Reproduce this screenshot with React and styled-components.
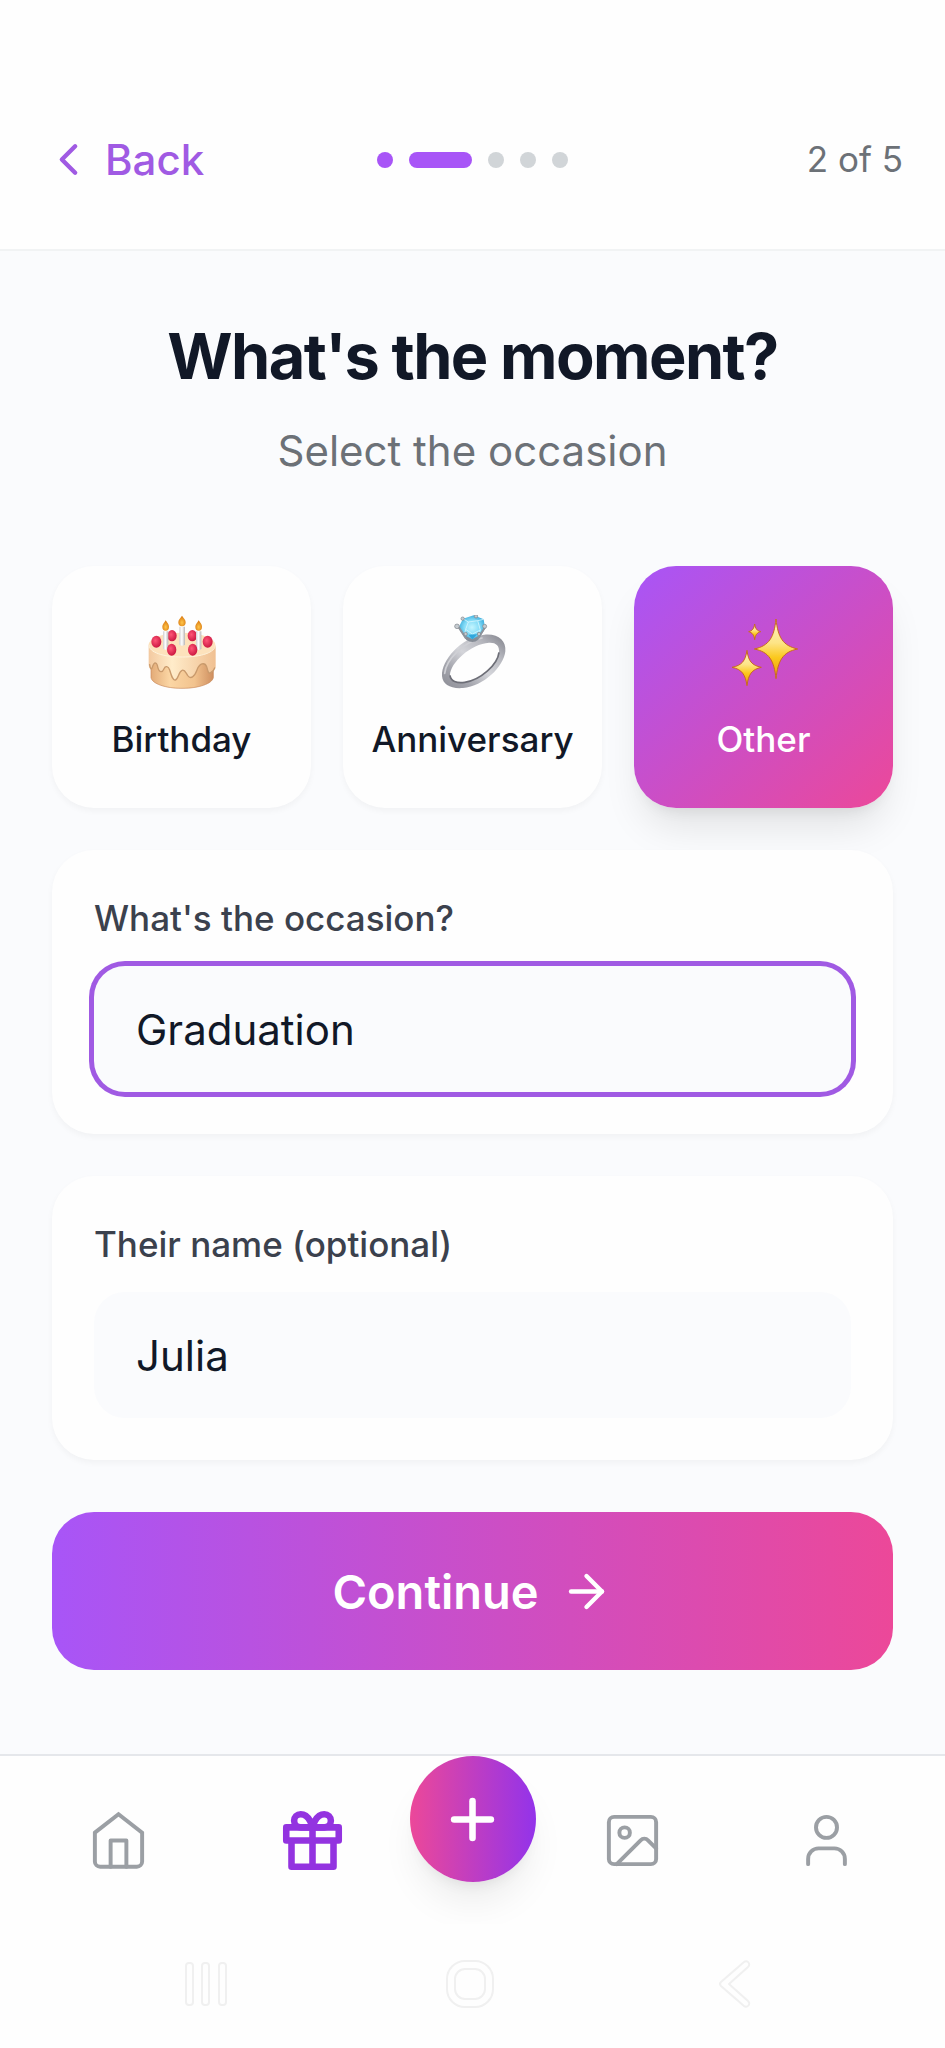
import React, { useState } from "react";
import styled, { createGlobalStyle, css } from "styled-components";
import { ArrowRight, ChevronLeft, Image, Plus, User } from "lucide-react";

const GlobalStyle = createGlobalStyle`
  *, *::before, *::after { box-sizing: border-box; }
  body {
    margin: 0;
    background: #fafbfd;
    color: #111827;
    font-family: Inter, "Liberation Sans", sans-serif;
    font-size: 42px;
    line-height: 63px;
  }
  button, input { font: inherit; color: inherit; margin: 0; border: 0; }
  button { cursor: pointer; }
  svg { display: block; flex: none; }
`;

const Screen = styled.div`
  display: flex;
  flex-direction: column;
  min-height: 100vh;
`;

const Header = styled.header`
  display: grid;
  grid-template-columns: 1fr auto 1fr;
  align-items: center;
  padding: 110px 42px 40px;
  background: #fefefe;
  border-bottom: 2px solid #f1f3f4;
`;

const BackButton = styled.button`
  justify-self: start;
  display: flex;
  align-items: center;
  gap: 10px;
  height: 99px;
  padding: 0;
  background: none;
  color: #a05ae3;
  font-weight: 500;
`;

const Steps = styled.div`
  display: flex;
  gap: 16px;
`;

const Step = styled.span`
  width: ${(p) => (p.$current ? 63 : 16)}px;
  height: 16px;
  border-radius: 8px;
  background: ${(p) => (p.$done || p.$current ? "#a855f7" : "#d1d5d8")};
`;

const StepCount = styled.span`
  justify-self: end;
  color: #6c7177;
  font-size: 35px;
`;

const Main = styled.main`
  flex: 1;
  display: flex;
  flex-direction: column;
  padding: 63px 52px 84px;
`;

const Title = styled.h1`
  margin: 0 0 21px;
  font-size: 63px;
  line-height: 84px;
  font-weight: 700;
  letter-spacing: -0.025em;
  text-align: center;
`;

const Subtitle = styled.p`
  margin: 0 0 84px;
  color: #6c7177;
  text-align: center;
`;

const Occasions = styled.div`
  display: grid;
  grid-template-columns: repeat(3, 1fr);
  gap: 32px;
  margin-bottom: 42px;
`;

const softShadow = "0 3px 6px rgba(0, 0, 0, 0.04)";

const Occasion = styled.button`
  display: flex;
  flex-direction: column;
  align-items: center;
  gap: 18px;
  padding: 49px 0 42px;
  border-radius: 42px;
  background: #fefefe;
  box-shadow: ${softShadow};
  font-size: 35px;
  line-height: 53px;
  font-weight: 500;
  ${(p) =>
    p.$selected &&
    css`
      background: linear-gradient(to bottom right, #a855f7, #ec4899);
      box-shadow: 0 26px 39px -8px rgba(0, 0, 0, 0.1), 0 10px 16px -10px rgba(0, 0, 0, 0.1);
      color: #fff;
    `}
`;

const Field = styled.div`
  display: flex;
  flex-direction: column;
  gap: 21px;
  margin-bottom: 42px;
  padding: 42px;
  border-radius: 42px;
  background: #fefefe;
  box-shadow: ${softShadow};
`;

const FieldLabel = styled.label`
  color: #3b414d;
  font-size: 35px;
  line-height: 53px;
  font-weight: 500;
`;

const TextInput = styled.input`
  width: 100%;
  height: 126px;
  padding: 0 42px;
  border-radius: 31px;
  outline: none;
  background: #fafbfd;
  box-shadow: ${(p) => (p.$active ? "0 0 0 5px #a05ae3" : "none")};
`;

const ContinueButton = styled.button`
  display: flex;
  justify-content: center;
  align-items: center;
  gap: 21px;
  height: 158px;
  margin-top: 10px;
  border-radius: 42px;
  background: linear-gradient(to right, #a855f7, #ec4899);
  color: #fff;
  font-size: 47px;
  font-weight: 600;
`;

const TabBar = styled.nav`
  display: flex;
  align-items: center;
  height: 170px;
  padding: 0 21px;
  border-top: 2px solid #e5e7eb;
  background: #fefefe;
`;

const Tab = styled.a`
  flex: 1;
  display: flex;
  justify-content: center;
  color: ${(p) => (p.$active ? "#9333e0" : "#9b9fa4")};
`;

const AddButton = styled.button`
  align-self: flex-start;
  display: grid;
  place-items: center;
  width: 126px;
  height: 126px;
  padding: 0;
  border-radius: 50%;
  background: linear-gradient(to right, #ec4899, #9333ea);
  box-shadow: 0 26px 39px -8px rgba(0, 0, 0, 0.08), 0 10px 16px -10px rgba(0, 0, 0, 0.1);
  color: #fff;
`;

const SystemBar = styled.div`
  display: grid;
  grid-template-columns: repeat(3, 1fr);
  justify-items: center;
  padding: 36px 78px 40px 74px;
  background: #fefefe;
`;

const SystemButton = styled.button`
  padding: 0;
  background: none;
`;

const CakeIcon = () => (
  <svg width="80" height="80" viewBox="308 195 240 240" aria-hidden="true">
    <defs>
      <linearGradient id="cakeSide" x1="0" x2="1" y1="0" y2="0">
        <stop offset="0" stopColor="#e3ab78" />
        <stop offset="0.3" stopColor="#fbd6a4" />
        <stop offset="0.7" stopColor="#f2c38e" />
        <stop offset="1" stopColor="#cf8f60" />
      </linearGradient>
      <linearGradient id="icing" x1="0" x2="1" y1="0" y2="0">
        <stop offset="0" stopColor="#f3c9a0" />
        <stop offset="0.35" stopColor="#ffecca" />
        <stop offset="1" stopColor="#f0c092" />
      </linearGradient>
      <linearGradient id="candle" x1="0" x2="1" y1="0" y2="0">
        <stop offset="0" stopColor="#cfcfd2" />
        <stop offset="0.45" stopColor="#ffffff" />
        <stop offset="1" stopColor="#b9b6b6" />
      </linearGradient>
      <radialGradient id="flame" cx="0.5" cy="0.65" r="0.6">
        <stop offset="0" stopColor="#ffc64a" />
        <stop offset="1" stopColor="#d9780f" />
      </radialGradient>
      <radialGradient id="berry" cx="0.4" cy="0.4" r="0.65">
        <stop offset="0" stopColor="#ff5577" />
        <stop offset="1" stopColor="#c9153f" />
      </radialGradient>
    </defs>
    <path d="M335 340v43c4 18 42 32 93 32s90-14 94-32v-43z" fill="url(#cakeSide)" stroke="#c98a5b" strokeWidth="2" />
    <path d="M328 284v60c1 12 8 18 12 5 5-14 11-12 14-3 4 22 14 24 20 10 4-9 13-8 17 4 6 20 10 32 17 30 9-3 10-25 20-29 8-4 11 7 16 14 10 16 22 4 29-15 7-20 23-25 29-10 4 14 5 22 12 18 10-8 15-10 15-20v-62z" fill="url(#icing)" />
    <path d="M331 344c2 13 5 18 9 5 5-14 11-12 14-3 4 22 14 24 20 10 4-9 13-8 17 4 6 20 10 32 17 30 9-3 10-25 20-29 8-4 11 7 16 14 10 16 22 4 29-15 7-20 23-25 29-10 4 14 5 22 12 18 7-4 10-6 12-14" fill="none" stroke="#c99a6c" strokeWidth="4" strokeLinecap="round" />
    <ellipse cx="428" cy="285" rx="100" ry="37" fill="#fde2bc" />
    <path d="M329 285c0 22 42 36 100 36s99-14 99-36" fill="none" stroke="#fff3dc" strokeWidth="3" />
    <g fill="url(#berry)">
      <ellipse cx="398" cy="257" rx="14" ry="17" />
      <ellipse cx="459" cy="257" rx="14" ry="17" />
      <ellipse cx="351" cy="275" rx="15" ry="18" />
      <ellipse cx="505" cy="275" rx="15" ry="18" />
    </g>
    <g fill="url(#candle)">
      <path d="M371 244h16v52q-8 6-16 0z" />
      <path d="M420 230h17v54q-8 6-17 0z" />
      <path d="M470 244h16v53q-8 6-16 0z" />
    </g>
    <g fill="url(#flame)">
      <path d="M379 211c5 7 10 12 10 19a10 12 0 0 1-20 0c0-7 6-12 10-19z" />
      <path d="M428 197c5 7 11 12 11 20a11 12 0 0 1-22 0c0-8 6-13 11-20z" />
      <path d="M478 211c5 7 10 12 10 19a10 12 0 0 1-20 0c0-7 6-12 10-19z" />
    </g>
    <g fill="url(#berry)">
      <ellipse cx="397" cy="299" rx="14" ry="18" />
      <ellipse cx="460" cy="299" rx="14" ry="18" />
    </g>
  </svg>
);

const RingIcon = () => (
  <svg width="80" height="80" viewBox="308 195 240 240" aria-hidden="true">
    <defs>
      <linearGradient id="band" x1="0" x2="1" y1="1" y2="0">
        <stop offset="0" stopColor="#8b8c94" />
        <stop offset="0.25" stopColor="#a4a5ad" />
        <stop offset="0.5" stopColor="#d4d5da" />
        <stop offset="0.75" stopColor="#b5b6bd" />
        <stop offset="1" stopColor="#7f8089" />
      </linearGradient>
      <radialGradient id="gem">
        <stop offset="0" stopColor="#c4f5ff" />
        <stop offset="0.6" stopColor="#84dcf7" />
        <stop offset="1" stopColor="#46b3e0" />
      </radialGradient>
    </defs>
    <path
      fillRule="evenodd"
      fill="url(#band)"
      d="M335 378C333 330 392 262 462 254c42-4 66 18 63 50-5 47-65 105-127 110-37 3-61-10-63-36zM359 376c2 18 20 24 44 21 47-6 99-53 103-90 2-20-9-30-30-29-53 3-117 60-117 98z"
    />
    <path d="M359 376c2 18 20 24 44 21 47-6 99-53 103-90" fill="none" stroke="#6d6e77" strokeWidth="5" />
    <path d="M343 370c4-42 58-95 112-106" fill="none" stroke="#cfd0d5" strokeWidth="5" strokeLinecap="round" />
    <path d="M380 228l28 42q20 12 36-1l22-36-38 22z" fill="#858c96" />
    <path d="M398 206l32-10 30 12 4 26-20 24-18 10-24-12-16-26z" fill="url(#gem)" />
    <path d="M398 206l16 10 28-4 18-4M414 216l-8 22 20 14 24-12-8-28M406 238l-4 18M450 240l-6 18" fill="none" stroke="#d9f8ff" strokeWidth="3" opacity="0.8" />
    <path d="M414 254l12 14 15-15z" fill="#2fa6dc" />
    <path d="M386 233l20 31M464 232l-20 32" stroke="#8d949d" strokeWidth="6" strokeLinecap="round" />
    <g fill="#c6cbd0" stroke="#7d838a" strokeWidth="2">
      <circle cx="380" cy="229" r="7" />
      <circle cx="397" cy="206" r="5" />
      <circle cx="437" cy="199" r="5" />
      <circle cx="463" cy="229" r="6" />
      <circle cx="406" cy="252" r="5" />
      <circle cx="446" cy="252" r="5" />
    </g>
  </svg>
);

const SparklesIcon = () => (
  <svg width="80" height="80" viewBox="324 195 240 240" aria-hidden="true">
    <defs>
      <linearGradient id="spark" x1="0" x2="0" y1="0" y2="1">
        <stop offset="0" stopColor="#fff3c0" />
        <stop offset="0.4" stopColor="#fde487" />
        <stop offset="0.65" stopColor="#fbc81c" />
        <stop offset="1" stopColor="#ea9a10" />
      </linearGradient>
    </defs>
    <g fill="url(#spark)" stroke="#c8691f" strokeWidth="3" strokeLinejoin="round">
      <path d="M480 207c6 55 20 80 65 90-45 9-59 35-65 89-6-54-20-80-65-89 45-10 59-35 65-90z" />
      <path d="M393 301c4 32 14 45 43 51-29 6-39 22-43 55-5-33-15-49-45-55 30-6 40-19 45-51z" />
      <path d="M416 222c2 14 7 20 18 23-11 3-16 10-18 24-2-14-7-21-18-24 11-3 16-9 18-23z" />
    </g>
  </svg>
);

const HomeIcon = () => (
  <svg width="63" height="63" viewBox="0 0 24 24" fill="none" stroke="currentColor" strokeWidth="1.5" strokeLinecap="round" strokeLinejoin="miter" aria-hidden="true">
    <path d="M3 9l9-7 9 7v11a2 2 0 0 1-2 2H5a2 2 0 0 1-2-2z" />
    <path d="M9 22V12h6v10" strokeLinejoin="round" />
  </svg>
);

const GiftIcon = () => (
  <svg width="63" height="63" viewBox="0 0 24 24" fill="none" stroke="currentColor" strokeWidth="2.5" strokeLinecap="round" strokeLinejoin="round" aria-hidden="true">
    <path d="M20 12v10H4V12M2 7h20v5H2zM12 22V7" />
    <path d="M12 7H7.500a2.500 2.500 0 0 1 0-5C11 2 12 7 12 7zM12 7h4.500a2.500 2.500 0 0 0 0-5C13 2 12 7 12 7z" />
  </svg>
);

const OutlineIcon = ({ children }) => (
  <svg width="48" height="48" viewBox="0 0 48 48" fill="none" stroke="#f0f0f0" strokeWidth="2" strokeLinejoin="round" aria-hidden="true">
    {children}
  </svg>
);

const STEPS = [1, 2, 3, 4, 5];
const CURRENT_STEP = 2;

const OCCASIONS = [
  { name: "Birthday", Icon: CakeIcon },
  { name: "Anniversary", Icon: RingIcon },
  { name: "Other", Icon: SparklesIcon },
];

export default function App() {
  const [selected, setSelected] = useState("Other");
  const [active, setActive] = useState("occasion");
  const [occasion, setOccasion] = useState("Graduation");
  const [name, setName] = useState("Julia");

  return (
    <>
      <GlobalStyle />
      <Screen>
        <Header>
          <BackButton type="button">
            <ChevronLeft size={53} aria-hidden="true" />
            Back
          </BackButton>
          <Steps aria-hidden="true">
            {STEPS.map((step) => (
              <Step key={step} $done={step < CURRENT_STEP} $current={step === CURRENT_STEP} />
            ))}
          </Steps>
          <StepCount>2 of 5</StepCount>
        </Header>

        <Main>
          <Title>What's the moment?</Title>
          <Subtitle>Select the occasion</Subtitle>
          <Occasions>
            {OCCASIONS.map(({ name: label, Icon }) => (
              <Occasion
                key={label}
                type="button"
                aria-pressed={selected === label}
                $selected={selected === label}
                onClick={() => setSelected(label)}
              >
                <Icon />
                {label}
              </Occasion>
            ))}
          </Occasions>
          <Field>
            <FieldLabel htmlFor="occasion">What's the occasion?</FieldLabel>
            <TextInput
              id="occasion"
              type="text"
              value={occasion}
              $active={active === "occasion"}
              onFocus={() => setActive("occasion")}
              onChange={(e) => setOccasion(e.target.value)}
            />
          </Field>
          <Field>
            <FieldLabel htmlFor="name">Their name (optional)</FieldLabel>
            <TextInput
              id="name"
              type="text"
              value={name}
              $active={active === "name"}
              onFocus={() => setActive("name")}
              onChange={(e) => setName(e.target.value)}
            />
          </Field>
          <ContinueButton type="button">
            Continue
            <ArrowRight size={53} aria-hidden="true" />
          </ContinueButton>
        </Main>

        <TabBar aria-label="Main">
          <Tab href="#home" aria-label="Home">
            <HomeIcon />
          </Tab>
          <Tab href="#gifts" aria-label="Gifts" aria-current="page" $active>
            <GiftIcon />
          </Tab>
          <AddButton type="button" aria-label="Create">
            <Plus size={63} strokeWidth={2.5} />
          </AddButton>
          <Tab href="#gallery" aria-label="Gallery">
            <Image size={63} strokeWidth={1.5} />
          </Tab>
          <Tab href="#profile" aria-label="Profile">
            <User size={63} strokeWidth={1.5} />
          </Tab>
        </TabBar>

        <SystemBar>
          <SystemButton type="button" aria-label="Recent apps">
            <OutlineIcon>
              <rect x="4" y="3" width="7" height="42" rx="3" />
              <rect x="20" y="3" width="7" height="42" rx="3" />
              <rect x="37" y="3" width="7" height="42" rx="3" />
            </OutlineIcon>
          </SystemButton>
          <SystemButton type="button" aria-label="Home screen">
            <OutlineIcon>
              <rect x="1" y="1" width="46" height="46" rx="18" />
              <rect x="9" y="9" width="30" height="30" rx="10" />
            </OutlineIcon>
          </SystemButton>
          <SystemButton type="button" aria-label="Go back">
            <OutlineIcon>
              <path d="M10 22L33 2a3 3 0 0 1 4 5L18 24l19 17a3 3 0 0 1-4 5L10 26q-2-2 0-4z" />
            </OutlineIcon>
          </SystemButton>
        </SystemBar>
      </Screen>
    </>
  );
}
